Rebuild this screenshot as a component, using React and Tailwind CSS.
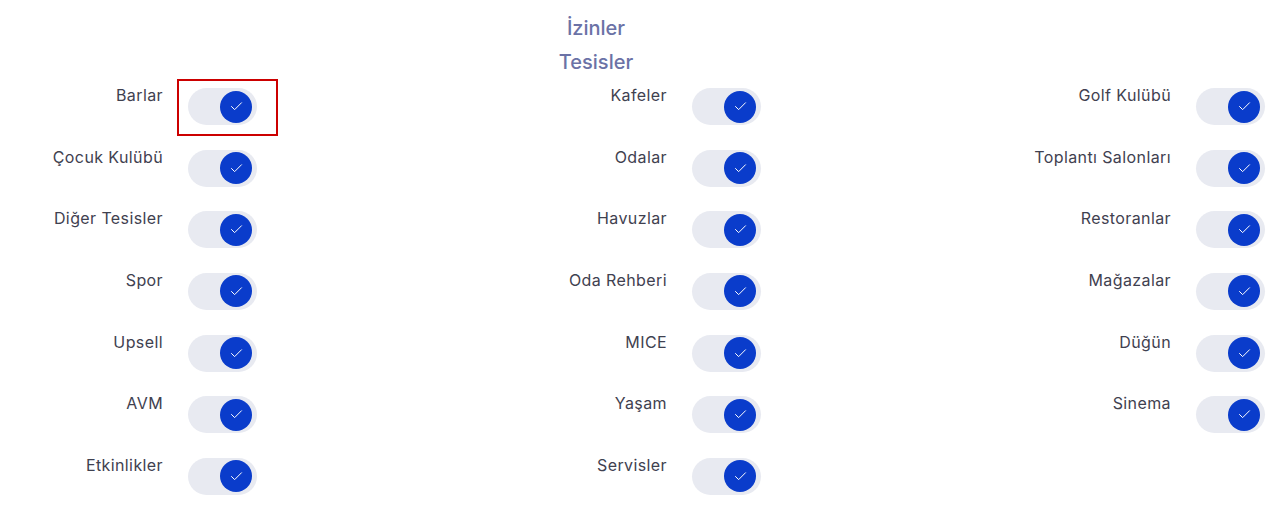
import { Check } from "lucide-react";

const rows = [
  ["Barlar", "Kafeler", "Golf Kulübü"],
  ["Çocuk Kulübü", "Odalar", "Toplantı Salonları"],
  ["Diğer Tesisler", "Havuzlar", "Restoranlar"],
  ["Spor", "Oda Rehberi", "Mağazalar"],
  ["Upsell", "MICE", "Düğün"],
  ["AVM", "Yaşam", "Sinema"],
  ["Etkinlikler", "Servisler", null],
];

// Toggle switch (always on)
function Toggle() {
  return (
    <div className="mt-[5px] flex h-[37px] w-[69px] items-center justify-end rounded-full bg-[#e8eaf1] pr-[5px]">
      <div className="flex h-[32px] w-[32px] items-center justify-center rounded-full bg-[#0a3ccb]">
        <Check className="h-[15px] w-[15px] text-white" strokeWidth={1.6} />
      </div>
    </div>
  );
}

function Item({ label, highlight }) {
  return (
    <div className="flex items-start">
      <div className="w-[163px] text-right text-[16px] leading-[24px] tracking-[0.4px] text-[#3f4150]">{label}</div>
      <div className="relative ml-[25px]">
        <Toggle />
        {highlight && (
          <div className="absolute left-[-11px] top-[-4px] h-[57px] w-[101px] border-2 border-[#cc0000]" />
        )}
      </div>
    </div>
  );
}

export default function App() {
  return (
    <div
      className="min-h-screen w-full bg-white"
      style={{ fontFamily: "Inter, 'Noto Sans', sans-serif" }}
    >
      <div className="w-[1192px] pt-[15px] text-center text-[20px] font-medium leading-[26px] text-[#6b72a6]">
        <div>İzinler</div>
        <div className="mt-[8px]">Tesisler</div>
      </div>
      <div className="mt-[8px]">
        {rows.map((row, i) => (
          <div key={i} className="grid h-[61.67px] grid-cols-[504px_504px_1fr]">
            {row.map((label, j) =>
              label ? <Item key={j} label={label} highlight={i === 0 && j === 0} /> : <div key={j} />
            )}
          </div>
        ))}
      </div>
    </div>
  );
}
